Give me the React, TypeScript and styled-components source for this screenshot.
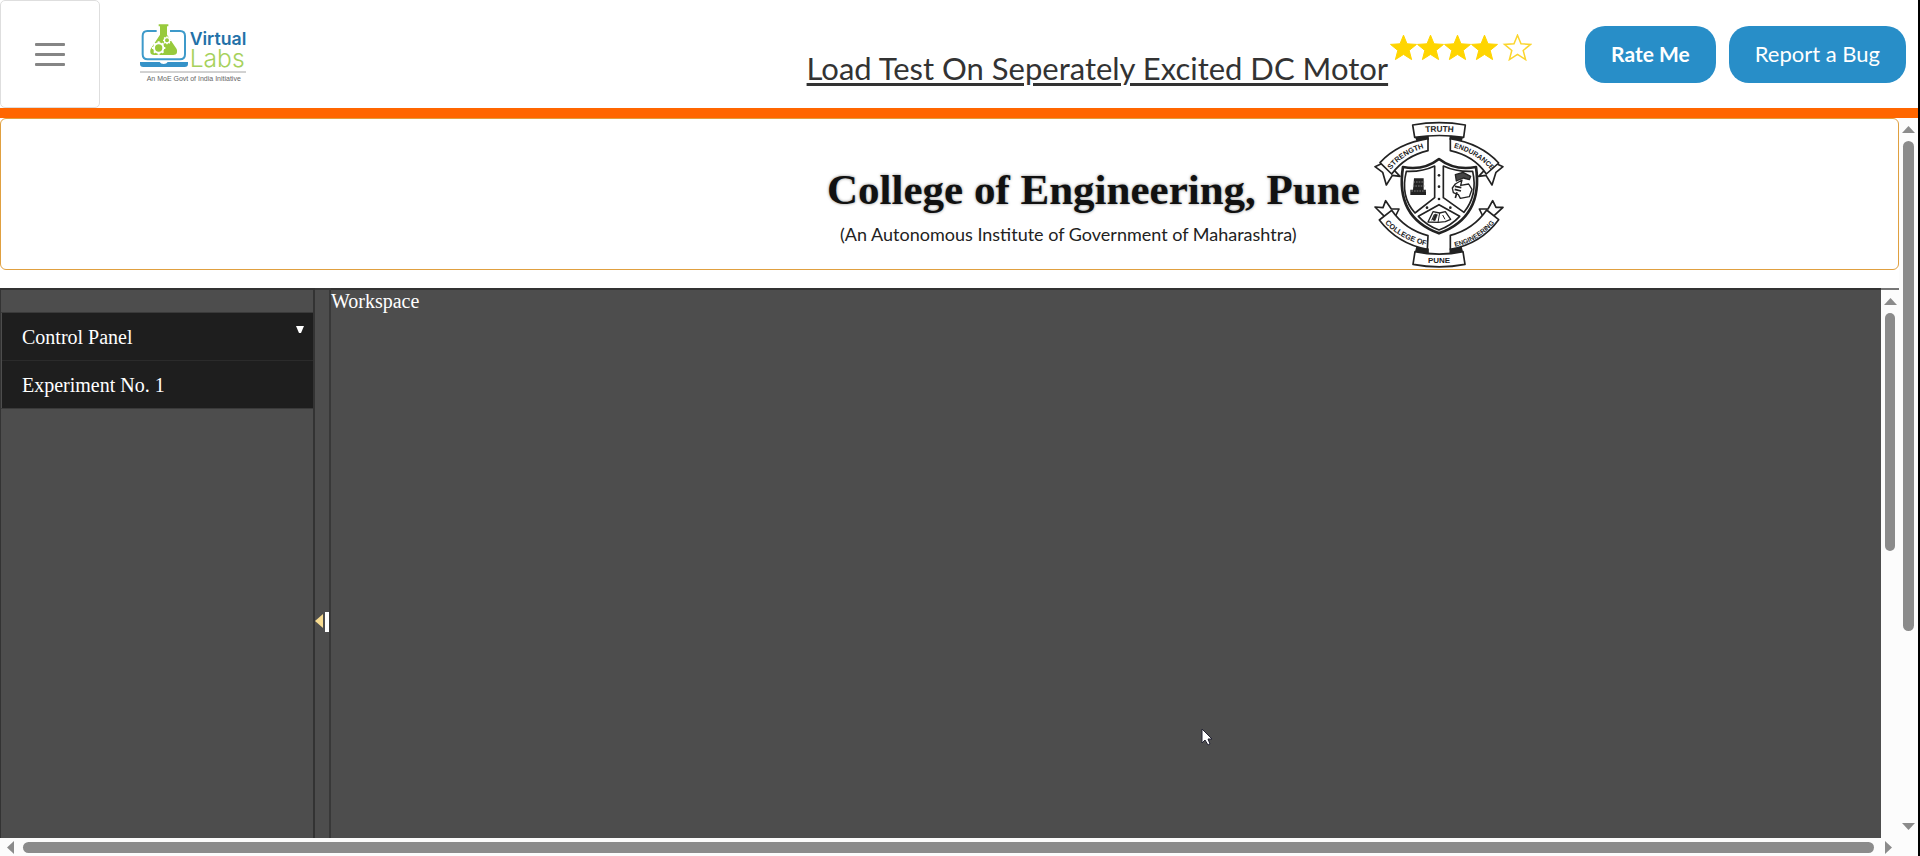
import React from "react";
import styled, { createGlobalStyle } from "styled-components";

const GlobalStyle = createGlobalStyle`
  *, *::before, *::after { box-sizing: border-box; }
  body { margin: 0; background: #fff; font-family: Lato, "Open Sans", sans-serif; }
`;

const Page = styled.div`
  display: flex;
  flex-direction: column;
  min-height: 100vh;
  border-right: 2px solid #000;
`;

const Header = styled.header`
  display: flex;
  align-items: center;
  height: 118px;
  padding-right: 12px;
  border-bottom: 10px solid #ff6600;
`;

const MenuButton = styled.button`
  display: flex;
  flex-direction: column;
  align-items: center;
  justify-content: center;
  gap: 7px;
  align-self: stretch;
  width: 100px;
  padding: 0;
  border: 1px solid #dedede;
  border-radius: 5px;
  background: #fff;
`;

const MenuLine = styled.span`
  width: 30px;
  height: 3px;
  border-radius: 1px;
  background: #858585;
`;

const LogoLink = styled.a`
  margin: 0 auto 2px 39px;
  line-height: 0;
`;

const TitleGroup = styled.div`
  display: flex;
  align-self: flex-start;
  align-items: flex-start;
  gap: 2px;
  margin-right: 53px;
  padding-top: 34px;
  white-space: nowrap;
`;

const Title = styled.h1`
  margin: 14px 0 0;
  font-size: 31px;
  line-height: 40px;
  font-weight: 400;
  color: #333;
  text-decoration: underline;
  text-decoration-thickness: 3px;
  text-underline-offset: 3px;
`;

const Stars = styled.div`
  display: flex;
  line-height: 0;
`;

const Actions = styled.div`
  display: flex;
  align-items: center;
  gap: 13px;
`;

const ActionButton = styled.button<{ $strong?: boolean }>`
  height: 57px;
  padding: 0 26px 2px;
  border: 0;
  border-radius: 20px;
  background: #288ec8;
  color: #fff;
  font-family: inherit;
  font-size: ${(p) => (p.$strong ? "21px" : "22px")};
  font-weight: ${(p) => (p.$strong ? 700 : 400)};
  white-space: nowrap;
`;

const Frame = styled.div`
  flex: 1;
  display: grid;
  grid-template-columns: minmax(0, 1fr) 19px;
  grid-template-rows: minmax(0, 1fr) 18px;
`;

const Content = styled.main`
  display: flex;
  flex-direction: column;
`;

const Banner = styled.section`
  display: flex;
  align-items: flex-start;
  height: 152px;
  padding: 2px 0 0 43.5%;
  border: 1px solid #e0a040;
  border-radius: 6px;
  white-space: nowrap;
`;

const BannerText = styled.div`
  display: flex;
  flex-direction: column;
  width: 547px;
  padding-top: 45px;
`;

const CollegeName = styled.h2`
  margin: 0;
  font: 700 43px/48px "Liberation Serif", serif;
  color: #111;
  text-shadow: 0 0 3px #888;
`;

const Subtitle = styled.p`
  margin: 8px 0 0 13px;
  font-size: 18px;
  line-height: 24px;
  color: #222;
`;

const Workbench = styled.section`
  flex: 1;
  display: flex;
  margin-top: 18px;
  font: 20px/23px "Liberation Serif", serif;
  color: #fff;
`;

const Sidebar = styled.nav`
  width: 315px;
  padding-top: 22px;
  border: solid #333;
  border-width: 2px 2px 0 1px;
  background: #4d4d4d;
`;

const MenuList = styled.ul`
  margin: 0;
  padding: 0 0 0 1px;
  border: solid #3a3a3a;
  border-width: 1px 0;
  list-style: none;
`;

const MenuItem = styled.li`
  background: #1e1e1e;
  & + & { border-top: 1px solid #2b2b2b; }
`;

const MenuLink = styled.a`
  display: flex;
  justify-content: space-between;
  height: 47px;
  padding: 13px 9px 11px 20px;
  color: #fff;
  text-decoration: none;
`;

const Splitter = styled.div`
  display: flex;
  flex-direction: column;
  width: 16px;
  border: solid #383838;
  border-width: 2px 2px 0 0;
  background: #4d4d4d;
  &::before { content: ""; flex: 322; }
  &::after { content: ""; flex: 206; }
`;

const CollapseButton = styled.button`
  height: 22px;
  padding: 0;
  border: 0;
  background: none;
  line-height: 0;
`;

const Workspace = styled.div`
  position: relative;
  flex: 1;
  border-top: 2px solid #333;
  background: #4d4d4d;
`;

const Pointer = styled.svg`
  position: absolute;
  left: 56%;
  top: 80%;
  margin-left: 2px;
`;

const VerticalBar = styled.div<{ $wide?: boolean }>`
  display: flex;
  flex-direction: column;
  align-items: center;
  width: ${(p) => (p.$wide ? "19px" : "18px")};
  padding: 8px 0;
  background: #fcfcfc;
`;

const InnerBar = styled(VerticalBar)`
  padding-bottom: 0;
  border-top: 2px solid #777;
`;

const HorizontalBar = styled.div`
  grid-column: 1 / -1;
  display: flex;
  align-items: center;
  padding: 0 26px 0 7px;
  background: #fcfcfc;
`;

const Thumb = styled.div<{ $share: number }>`
  flex: ${(p) => p.$share};
  align-self: stretch;
  margin: 8px 4px;
  border-radius: 6px;
  background: #8b8b8b;
`;

const WideThumb = styled.div`
  flex: 1;
  height: 11px;
  margin: 0 11px 0 9px;
  border-radius: 6px;
  background: #8b8b8b;
`;

const Rest = styled.div<{ $share: number }>`
  flex: ${(p) => p.$share};
`;

const arrowPoints = {
  up: "0,7 6.5,0 13,7",
  down: "0,0 13,0 6.5,7",
  left: "7,0 7,13 0,6.5",
  right: "0,0 7,6.5 0,13",
};

function Arrow({ to }: { to: keyof typeof arrowPoints }) {
  const tall = to === "left" || to === "right";
  return (
    <svg width={tall ? 7 : 13} height={tall ? 13 : 7} aria-hidden="true">
      <polygon points={arrowPoints[to]} fill="#8b8b8b" />
    </svg>
  );
}

function Star({ filled }: { filled: boolean }) {
  return (
    <svg width={filled ? 27 : 34} height="27" viewBox={filled ? "0 0 27 27" : "-6 0 34 27"} aria-hidden="true">
      <path
        d="M13.5 1.2 17 9.8 26.5 10.4 19.2 16.4 21.6 25.6 13.5 20.4 5.4 25.6 7.8 16.4.5 10.4 10 9.8Z"
        fill={filled ? "#ffd500" : "#fff"}
        stroke={filled ? "#ffd500" : "#fbd52c"}
        strokeWidth={filled ? 1 : 1.5}
      />
    </svg>
  );
}

function Gear({ x, y, r, width }: { x: number; y: number; r: number; width: number }) {
  return (
    <g transform={`translate(${x} ${y})`} stroke="#fff" fill="none">
      <circle r={r} strokeWidth={width} />
      {[0, 45, 90, 135].map((a) => (
        <g key={a} transform={`rotate(${a})`} strokeWidth={width}>
          <path d={`M0 ${-r - width}V${-r}M0 ${r}V${r + width}`} />
        </g>
      ))}
    </g>
  );
}

function Logo() {
  return (
    <svg width="108" height="60" viewBox="417 69 324 180" role="img" aria-label="Virtual Labs">
      <path d="M470 93H442Q428 93 428 108V163Q428 178 443 178H540Q555 178 555 163V108Q555 93 540 93H510" fill="none" stroke="#3e9aca" strokeWidth="6" />
      <path d="M420 186H479Q482 192 491 192T503 186H564V192Q564 201 554 201H430Q420 201 420 192Z" fill="#3592c8" />
      <path d="M476 73H505V79H501V104L530 147Q536 164 520 165H462Q446 164 452 147L480 104V79H476Z" fill="#98ca3c" />
      <Gear x={476} y={144} r={14} width={6} />
      <Gear x={501} y={121} r={8} width={4} />
      <text x="569" y="136" fontFamily="Inter, sans-serif" fontSize="53" fontWeight="600" fill="#2371a8">Virtual</text>
      <text x="569" y="200" fontFamily="Inter, sans-serif" fontSize="74" fontWeight="300" fill="#a6d15c">Labs</text>
      <path d="M420 216H738" stroke="#777" strokeWidth="2" />
      <text x="440" y="242" fontFamily="Liberation Sans, sans-serif" fontSize="21" fill="#666">An MoE Govt of India Initiative</text>
    </svg>
  );
}

function Crest() {
  return (
    <svg width="131" height="148" viewBox="41 27 393 444" role="img" aria-label="College of Engineering Pune crest">
      <defs>
        <path id="strength" d="M88 178Q126 125 196 107" />
        <path id="endurance" d="M270 104Q347 120 401 183" />
        <path id="truth" d="M160 66Q237 52 315 66" />
        <path id="college" d="M70 329Q119 384 202 402" />
        <path id="engineering" d="M276 406Q353 391 408 327" />
      </defs>
      <g fill="#fff" stroke="#222" strokeWidth="5" strokeLinejoin="round">
        <path d="M73 151 44 164 67 181 78 219 96 190 119 193 97 170Z" />
        <path d="M399 151 428 164 407 181 395 219 377 190 355 193 377 170Z" />
        <path d="M73 314 44 285 68 287 76 266 93 291 116 291 97 330Z" />
        <path d="M398 314 428 286 407 286 397 266 383 291 357 291 376 330Z" />
        <path d="M165 72 171 86 203 82 203 72ZM307 72 302 86 270 82 270 72Z" fill="#222" />
        <path d="M170 406 203 411 203 423 165 425ZM302 406 270 411 270 423 307 425Z" fill="#222" />
        <path d="M59 152Q112 94 203 80V116Q135 132 94 186Z" />
        <path d="M270 80Q362 95 415 153L378 186Q340 131 270 116Z" />
        <path d="M57 324 94 295Q134 353 203 371L201 412Q111 395 57 324Z" />
        <path d="M415 323 379 294Q338 353 270 370V412Q362 395 415 323Z" />
        <path d="M157 39Q237 25 315 39L310 76Q237 65 163 76Z" />
        <path d="M164 419Q237 434 308 419L314 457Q237 472 158 457Z" />
        <path d="M128 165Q190 177 236 141Q283 177 347 165Q369 316 236 364Q104 316 128 165Z" strokeWidth="8" />
        <path d="M138 178Q186 180 223 162V257L164 303Q119 253 138 178Z" strokeWidth="5" />
        <path d="M337 178Q288 180 249 162V257L311 301Q353 248 337 178Z" strokeWidth="5" />
        <path d="M236 278 298 313Q272 341 236 354Q200 341 174 313Z" strokeWidth="5" />
      </g>
      <g fill="#222">
        <path d="M161 199H190V233H197V249H150V233H158Z" />
        <circle cx="236" cy="190" r="4" />
        <circle cx="236" cy="224" r="4" />
        <circle cx="236" cy="261" r="4" />
        <circle cx="200" cy="287" r="4" />
        <circle cx="270" cy="287" r="4" />
      </g>
      <path d="M159 210H192M157 222H194M153 237H196" stroke="#aaa" strokeWidth="2" strokeDasharray="5 3" />
      <g fill="#fff" stroke="#222" strokeWidth="4" strokeLinejoin="round">
        <path d="M285 188 308 181 331 193 327 203 309 198 288 207Z" fill="#444" />
        <path d="M305 204 301 220 325 216 335 232 327 254 300 259 294 248 279 242 276 228 285 216Z" />
        <path d="M285 258 290 241M283 232 302 237M284 223 303 227" strokeWidth="5" />
        <path d="M218 299 238 303 255 299 271 322 255 329 233 331 203 330Z" />
        <path d="M238 303 233 331M222 307 214 325M247 309 254 322" strokeWidth="3" />
        <path d="M224 306 231 308 224 326 217 324Z" fill="#222" strokeWidth="2" />
      </g>
      <g fontFamily="Liberation Sans, sans-serif" fontSize="22" fontWeight="700" fill="#222" textAnchor="middle">
        <text fontSize="25"><textPath href="#truth" startOffset="50%">TRUTH</textPath></text>
        <text><textPath href="#strength" startOffset="50%">STRENGTH</textPath></text>
        <text fontSize="21"><textPath href="#endurance" startOffset="50%">ENDURANCE</textPath></text>
        <text><textPath href="#college" startOffset="50%">COLLEGE OF</textPath></text>
        <text fontSize="20"><textPath href="#engineering" startOffset="50%">ENGINEERING</textPath></text>
        <text x="236" y="454" fontSize="24">PUNE</text>
      </g>
    </svg>
  );
}

export default function App() {
  return (
    <>
      <GlobalStyle />
      <Page>
        <Header>
          <MenuButton aria-label="Open menu">
            <MenuLine />
            <MenuLine />
            <MenuLine />
          </MenuButton>
          <LogoLink href="#home">
            <Logo />
          </LogoLink>
          <TitleGroup>
            <Title>Load Test On Seperately Excited DC Motor</Title>
            <Stars role="img" aria-label="4 out of 5 stars">
              {[1, 2, 3, 4, 5].map((n) => (
                <Star key={n} filled={n < 5} />
              ))}
            </Stars>
          </TitleGroup>
          <Actions>
            <ActionButton $strong>Rate Me</ActionButton>
            <ActionButton>Report a Bug</ActionButton>
          </Actions>
        </Header>
        <Frame>
          <Content>
            <Banner>
              <BannerText>
                <CollegeName>College of Engineering, Pune</CollegeName>
                <Subtitle>(An Autonomous Institute of Government of Maharashtra)</Subtitle>
              </BannerText>
              <Crest />
            </Banner>
            <Workbench>
              <Sidebar>
                <MenuList>
                  <MenuItem>
                    <MenuLink href="#control-panel">
                      Control Panel
                      <svg width="8" height="8" aria-hidden="true">
                        <path d="M0 0H8L5 7H3Z" fill="#fff" />
                      </svg>
                    </MenuLink>
                  </MenuItem>
                  <MenuItem>
                    <MenuLink href="#experiment-1">Experiment No. 1</MenuLink>
                  </MenuItem>
                </MenuList>
              </Sidebar>
              <Splitter>
                <CollapseButton aria-label="Collapse sidebar">
                  <svg width="14" height="22" aria-hidden="true">
                    <path d="M0 10 8 3V17Z" fill="#f8dc91" />
                    <rect x="10" y="1" width="4" height="20" fill="#fff" />
                  </svg>
                </CollapseButton>
              </Splitter>
              <Workspace>
                Workspace
                <Pointer width="12" height="18" aria-hidden="true">
                  <path d="M1 1V15L4 12 7 17 9 16 7 11H11Z" fill="#fff" stroke="#223" strokeWidth="1" />
                </Pointer>
              </Workspace>
              <InnerBar aria-hidden="true">
                <Arrow to="up" />
                <Thumb $share={239} />
                <Rest $share={280} />
              </InnerBar>
            </Workbench>
          </Content>
          <VerticalBar $wide aria-hidden="true">
            <Arrow to="up" />
            <Thumb $share={490} />
            <Rest $share={184} />
            <Arrow to="down" />
          </VerticalBar>
          <HorizontalBar aria-hidden="true">
            <Arrow to="left" />
            <WideThumb />
            <Arrow to="right" />
          </HorizontalBar>
        </Frame>
      </Page>
    </>
  );
}
